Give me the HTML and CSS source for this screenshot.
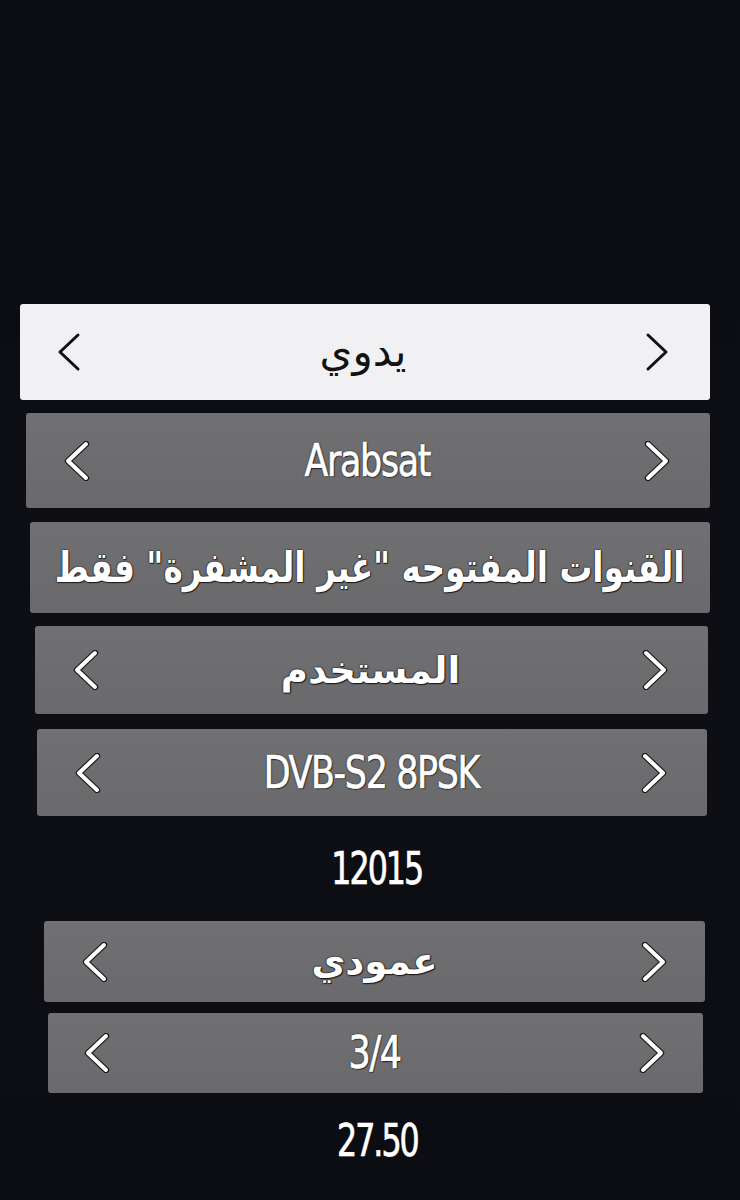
FILE: index.html
```html
<!DOCTYPE html>
<html lang="ar">
<head>
<meta charset="utf-8">
<link rel="stylesheet" href="styles.css">
</head>
<body>
<div class="screen">
  <div class="menu">
    <div class="row row-active r1">
      <svg class="chev" viewBox="0 0 26 40"><polyline class="ln" points="22,3 4,20 22,37"/></svg>
      <span class="val ar dark">يدوي</span>
      <svg class="chev" viewBox="0 0 26 40"><polyline class="ln" points="4,3 22,20 4,37"/></svg>
    </div>
    <div class="row r2">
      <svg class="chev" viewBox="0 0 26 40"><polyline class="ol" points="22,3 4,20 22,37"/><polyline class="ln" points="22,3 4,20 22,37"/></svg>
      <span class="val lat">Arabsat</span>
      <svg class="chev" viewBox="0 0 26 40"><polyline class="ol" points="4,3 22,20 4,37"/><polyline class="ln" points="4,3 22,20 4,37"/></svg>
    </div>
    <div class="row r3 row-plain">
      <span class="val ar big">القنوات المفتوحه "غير المشفرة" فقط</span>
    </div>
    <div class="row r4">
      <svg class="chev" viewBox="0 0 26 40"><polyline class="ol" points="22,3 4,20 22,37"/><polyline class="ln" points="22,3 4,20 22,37"/></svg>
      <span class="val ar">المستخدم</span>
      <svg class="chev" viewBox="0 0 26 40"><polyline class="ol" points="4,3 22,20 4,37"/><polyline class="ln" points="4,3 22,20 4,37"/></svg>
    </div>
    <div class="row r5">
      <svg class="chev" viewBox="0 0 26 40"><polyline class="ol" points="22,3 4,20 22,37"/><polyline class="ln" points="22,3 4,20 22,37"/></svg>
      <span class="val lat">DVB-S2 8PSK</span>
      <svg class="chev" viewBox="0 0 26 40"><polyline class="ol" points="4,3 22,20 4,37"/><polyline class="ln" points="4,3 22,20 4,37"/></svg>
    </div>
    <div class="plain p1"><span class="val lat num">12015</span></div>
    <div class="row r7">
      <svg class="chev" viewBox="0 0 26 40"><polyline class="ol" points="22,3 4,20 22,37"/><polyline class="ln" points="22,3 4,20 22,37"/></svg>
      <span class="val ar">عمودي</span>
      <svg class="chev" viewBox="0 0 26 40"><polyline class="ol" points="4,3 22,20 4,37"/><polyline class="ln" points="4,3 22,20 4,37"/></svg>
    </div>
    <div class="row r8">
      <svg class="chev" viewBox="0 0 26 40"><polyline class="ol" points="22,3 4,20 22,37"/><polyline class="ln" points="22,3 4,20 22,37"/></svg>
      <span class="val lat">3/4</span>
      <svg class="chev" viewBox="0 0 26 40"><polyline class="ol" points="4,3 22,20 4,37"/><polyline class="ln" points="4,3 22,20 4,37"/></svg>
    </div>
    <div class="plain p2"><span class="val lat num">27.50</span></div>
  </div>
</div>
</body>
</html>
```
FILE: styles.css
```css
html, body {
  margin: 0;
  padding: 0;
  background: #0c0d13;
}
.screen {
  width: 740px;
  height: 1200px;
  overflow: hidden;
  background: linear-gradient(180deg, #0b0c12 0%, #0e0f15 60%, #0c0d12 100%);
}
.menu {
  display: flex;
  flex-direction: column;
  padding-top: 304px;
}
.row {
  display: flex;
  align-items: center;
  justify-content: space-between;
  box-sizing: border-box;
  border-radius: 3px;
  background: linear-gradient(180deg, #707072 0%, #6a6a6c 100%);
  padding: 0 36px 0 36px;
}
.row-active {
  background: #f1f1f3;
}
.row-plain {
  justify-content: center;
  padding: 0 10px;
}
.r1 { margin: 0 30px 13px 20px; height: 96px; padding: 0 40px 0 36px; }
.r2 { margin: 0 30px 14px 26px; height: 95px; padding: 0 40px 0 38px; }
.r3 { margin: 0 30px 13px 30px; height: 91px; }
.r4 { margin: 0 32px 15px 35px; height: 88px; padding: 0 40px 0 38px; }
.r5 { margin: 0 33px 0 37px; height: 87px; padding: 0 40px 0 38px; }
.r7 { margin: 0 35px 11px 44px; height: 81px; padding: 0 38px 0 38px; }
.r8 { margin: 0 37px 0 48px; height: 80px; padding: 0 38px 0 36px; }
.plain {
  display: flex;
  justify-content: center;
  align-items: center;
}
.p1 { height: 105px; padding-left: 14px; }
.p2 { height: 96px; padding-left: 14px; }
.chev {
  width: 26px;
  height: 40px;
  flex: none;
}
.chev polyline {
  fill: none;
  stroke-linecap: round;
  stroke-linejoin: round;
}
.chev .ol {
  stroke: #1a1a1c;
  stroke-width: 6.4;
}
.chev .ln {
  stroke: #ffffff;
  stroke-width: 4;
}
.row-active .chev .ln {
  stroke: #111114;
  stroke-width: 3;
}
.val {
  color: #ffffff;
  text-shadow: 0 0 1px #111, 0 0 2px #111, 1px 1px 1px #222;
  line-height: 1;
  white-space: nowrap;
}
.lat {
  font-family: "DejaVu Sans Condensed", "DejaVu Sans", sans-serif;
  font-stretch: condensed;
  font-size: 44px;
  letter-spacing: -1.5px;
  display: inline-block;
  transform: scaleX(0.88);
  -webkit-text-stroke: 0.7px #ffffff;
}
.num {
  letter-spacing: -2.5px;
  transform: scaleX(0.8);
}
.ar {
  font-family: "DejaVu Sans", sans-serif;
  font-weight: bold;
  font-size: 37px;
  direction: rtl;
  letter-spacing: -0.5px;
}
.big {
  font-size: 42px;
  letter-spacing: -1px;
  display: inline-block;
  transform: scaleX(0.78);
}
.dark {
  color: #121214;
  text-shadow: none;
  font-weight: normal;
  font-size: 42px;
}
```
